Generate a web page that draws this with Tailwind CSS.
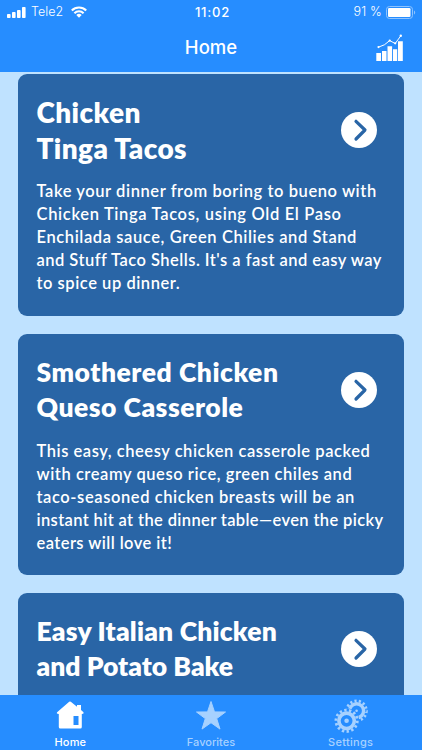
<!DOCTYPE html>
<html lang="en">

<head>
  <meta charset="UTF-8" />
  <meta name="viewport" content="width=device-width, initial-scale=1.0" />
  <title>Home</title>
  <script src="https://cdn.jsdelivr.net/npm/@tailwindcss/browser@4"></script>
</head>

<body class="flex h-screen flex-col overflow-hidden bg-[#bfe2ff] font-['Inter',sans-serif] text-white">
  <!-- Status bar + navigation bar -->
  <header class="h-[72px] shrink-0 bg-[#268dff]">
    <div class="grid h-6 grid-cols-3 items-center pr-[6px] pl-[7px] text-[12.5px] leading-6">
      <div class="flex items-center">
        <svg class="mr-[5px] h-[11px] w-[19px]" viewBox="0 0 19 11" fill="currentColor">
          <rect x="0" y="7" width="3.6" height="4" rx=".8" />
          <rect x="5" y="5" width="3.6" height="6" rx=".8" />
          <rect x="10" y="3" width="3.6" height="8" rx=".8" />
          <rect x="15" y="0" width="3.6" height="11" rx=".8" />
        </svg>
        <span class="font-light">Tele2</span>
        <svg class="ml-[8px] h-[12px] w-[16px]" viewBox="0 0 16 12" fill="none" stroke="currentColor" stroke-width="2.1">
          <path d="M.8 4.5a10.2 10.2 0 0 1 14.4 0M3.4 7.2a6.5 6.5 0 0 1 9.2 0" />
          <path d="M5.3 9.1a3.9 3.9 0 0 1 5.4 0L8 11.7z" fill="currentColor" stroke="none" />
        </svg>
      </div>
      <div class="pl-[2px] text-center text-[13px] font-medium tracking-[.8px]">11:02</div>
      <div class="flex items-center justify-end">
        <span class="mr-[4px] font-light tracking-[.2px]">91 %</span>
        <svg class="h-[13px] w-[30px]" viewBox="0 0 30 13" fill="none">
          <rect x=".5" y=".5" width="26" height="12" rx="3" stroke="#8dc3ff" />
          <rect x="2" y="2" width="22.5" height="9" rx="1.2" fill="#fff" />
          <path d="M28 4.5c1.6.5 1.6 3.5 0 4z" fill="#8dc3ff" />
        </svg>
      </div>
    </div>
    <div class="grid h-12 grid-cols-3 items-center">
      <h1 class="col-start-2 text-center text-[18.5px] font-medium">Home</h1>
      <svg class="mr-[18px] h-7 w-7 justify-self-end" viewBox="0 0 28 28" fill="#fff">
        <path d="M.3 19h4.7v8H.3zM6 17h4.5v10H6zM11.5 12.3h4.6V27h-4.6zM17 15.3h4.2V27H17zM22 7.3h4.8V27H22z" />
        <path d="M2.5 13.1 8.4 10.8 13.7 6.6 19.2 9.5 24.8 1.8" fill="none" stroke="#fff" />
        <circle cx="2.5" cy="13.1" r="1.1" />
        <circle cx="13.7" cy="6.6" r="1.1" />
        <circle cx="19.2" cy="9.3" r="1.1" />
        <circle cx="24.8" cy="1.8" r="1.2" />
      </svg>
    </div>
  </header>

  <!-- Recipe list -->
  <main class="flex min-h-0 flex-1 flex-col gap-[18px] overflow-hidden pt-[2px] pr-[18.5px] pl-[18px] font-['Lato',sans-serif] whitespace-nowrap">
    <article class="h-[241.5px] shrink-0 rounded-[9px] bg-[#2965a6] pt-[20px] pr-[26.5px] pl-[18.5px]">
      <div class="flex h-[72px] items-center justify-between">
        <h2 class="text-[28px] leading-[36.5px] font-extrabold">
          <span class="block w-fit tracking-[.4px]">Chicken</span>
          <span class="block w-fit tracking-[.4px]">Tinga Tacos</span>
        </h2>
        <svg class="h-9 w-9" viewBox="0 0 36 36" fill="none">
          <circle cx="18" cy="18" r="18" fill="#fff" />
          <path d="M15 9.3l9 8.7-9 9" stroke="#2965a6" stroke-width="3.2" stroke-linecap="round" stroke-linejoin="round" />
        </svg>
      </div>
      <p class="mt-[14px] text-[16.5px] leading-[23px] font-semibold">
        <span class="block w-fit tracking-[.58px]">Take your dinner from boring to bueno with</span>
        <span class="block w-fit tracking-[.67px]">Chicken Tinga Tacos, using Old El Paso</span>
        <span class="block w-fit tracking-[.6px]">Enchilada sauce, Green Chilies and Stand</span>
        <span class="block w-fit tracking-[.47px]">and Stuff Taco Shells. It's a fast and easy way</span>
        <span class="block w-fit tracking-[.54px]">to spice up dinner.</span>
      </p>
    </article>

    <article class="h-[241.5px] shrink-0 rounded-[9px] bg-[#2965a6] pt-[20px] pr-[26.5px] pl-[18.5px]">
      <div class="flex h-[72px] items-center justify-between">
        <h2 class="text-[26.5px] leading-[35px] font-extrabold">
          <span class="block w-fit tracking-[.52px]">Smothered Chicken</span>
          <span class="block w-fit tracking-[.48px]">Queso Casserole</span>
        </h2>
        <svg class="h-9 w-9" viewBox="0 0 36 36" fill="none">
          <circle cx="18" cy="18" r="18" fill="#fff" />
          <path d="M15 9.3l9 8.7-9 9" stroke="#2965a6" stroke-width="3.2" stroke-linecap="round" stroke-linejoin="round" />
        </svg>
      </div>
      <p class="mt-[14px] text-[16.5px] leading-[23px] font-semibold">
        <span class="block w-fit tracking-[.54px]">This easy, cheesy chicken casserole packed</span>
        <span class="block w-fit tracking-[.56px]">with creamy queso rice, green chiles and</span>
        <span class="block w-fit tracking-[.59px]">taco-seasoned chicken breasts will be an</span>
        <span class="block w-fit tracking-[.37px]">instant hit at the dinner table—even the picky</span>
        <span class="block w-fit tracking-[.43px]">eaters will love it!</span>
      </p>
    </article>

    <article class="h-[241.5px] shrink-0 rounded-[9px] bg-[#2965a6] pt-[20px] pr-[26.5px] pl-[18.5px]">
      <div class="flex h-[72px] items-center justify-between">
        <h2 class="text-[26.5px] leading-[35px] font-extrabold">
          <span class="block w-fit tracking-[.18px]">Easy Italian Chicken</span>
          <span class="block w-fit">and Potato Bake</span>
        </h2>
        <svg class="h-9 w-9" viewBox="0 0 36 36" fill="none">
          <circle cx="18" cy="18" r="18" fill="#fff" />
          <path d="M15 9.3l9 8.7-9 9" stroke="#2965a6" stroke-width="3.2" stroke-linecap="round" stroke-linejoin="round" />
        </svg>
      </div>
    </article>
  </main>

  <!-- Tab bar -->
  <nav class="grid h-[55.5px] shrink-0 grid-cols-3 bg-[#268dff] text-[11px] font-medium text-[#a6d1ff]">
    <a class="flex flex-col items-center pt-[3px] text-white">
      <svg class="h-9 w-9" viewBox="0 0 36 36" fill="currentColor">
        <path fill-rule="evenodd" d="M17.2 3.7Q18 3.1 18.8 3.7L25 8.8V7h4v5l2.5 2.3q.8 1.7-1.7 1.6V29q0 1.5-1.5 1.5h-20q-1.500 0-1.500-1.500V15.900q-2.800 0-1.700-1.700zM21.500 18v9h5v-9z" />
      </svg>
      <span class="leading-4 tracking-[.2px]">Home</span>
    </a>
    <a class="flex flex-col items-center pt-[3px]">
      <svg class="h-9 w-9" viewBox="0 0 36 36" fill="currentColor" stroke="currentColor" stroke-linejoin="round">
        <path d="M18 3.500l3.500 10.400 11 .1-8.800 6.600 3.300 10.500-9-6.400-9 6.400 3.300-10.500L3.500 14l11-.1z" />
      </svg>
      <span class="leading-4">Favorites</span>
    </a>
    <a class="flex flex-col items-center pt-[3px] pr-[2px]">
      <svg class="h-9 w-9" viewBox="0 0 36 36" fill="none" stroke="currentColor">
        <circle cx="23.600" cy="12.800" r="7" stroke-width="3.400" />
        <circle cx="23.600" cy="12.800" r="9.800" stroke-width="2.800" pathLength="28" stroke-dasharray="1 1" />
        <circle cx="13.600" cy="22.800" r="12.600" fill="#268dff" stroke="none" />
        <circle cx="23.600" cy="12.800" r="1.300" fill="currentColor" stroke="none" />
        <circle cx="13.600" cy="22.800" r="7.700" stroke-width="3.600" />
        <circle cx="13.600" cy="22.800" r="10.700" stroke-width="2.800" pathLength="28" stroke-dasharray="1 1" />
        <circle cx="13.600" cy="22.800" r="2.300" fill="currentColor" stroke="none" />
      </svg>
      <span class="leading-4 tracking-[.3px]">Settings</span>
    </a>
  </nav>
</body>

</html>
